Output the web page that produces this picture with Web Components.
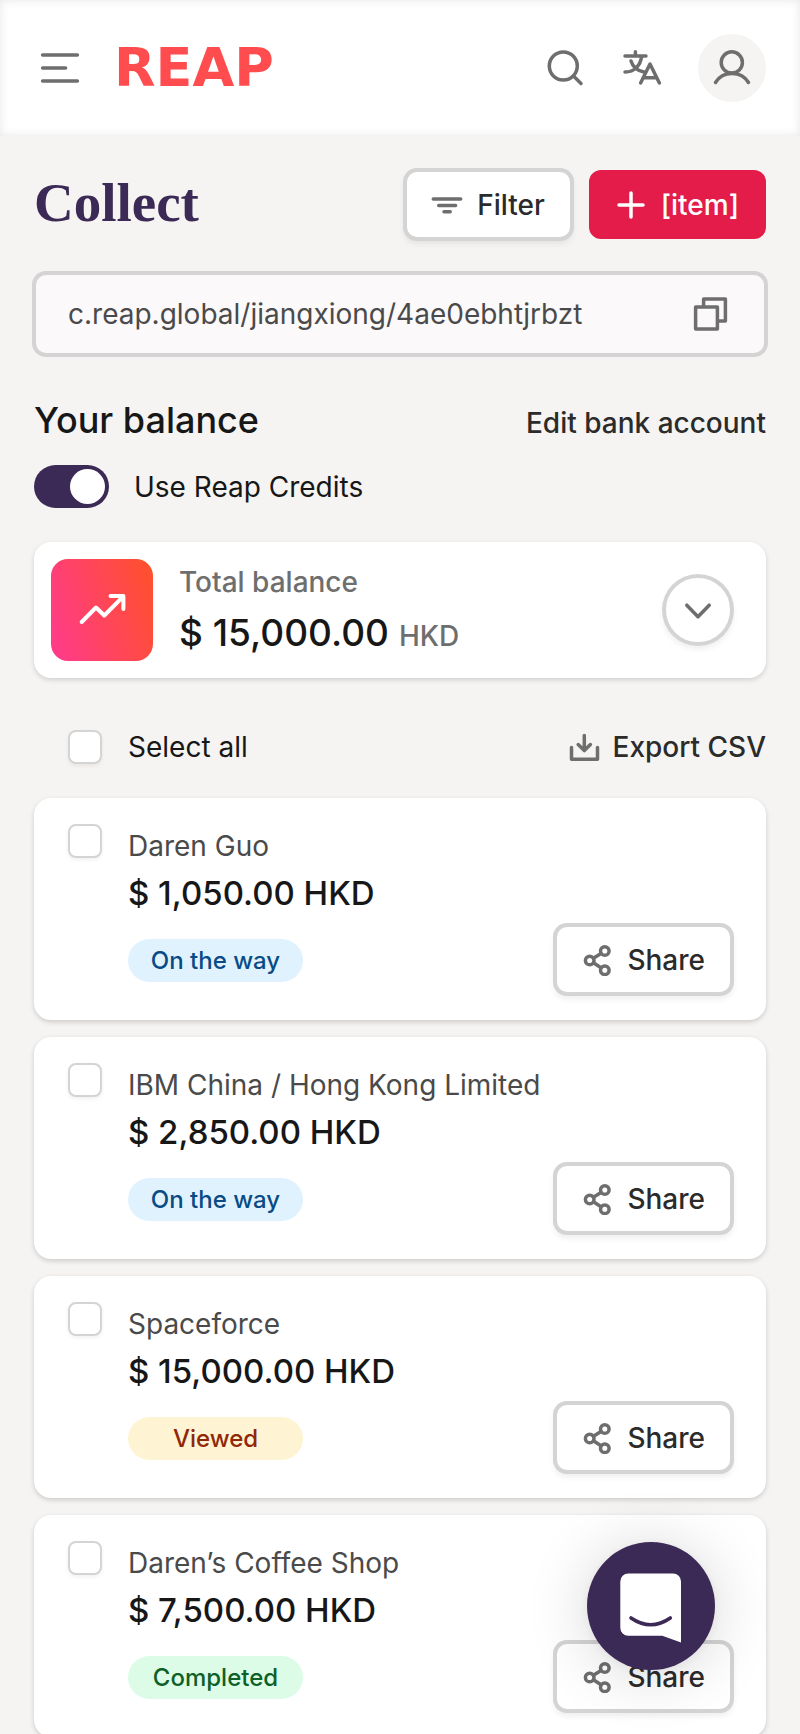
<!DOCTYPE html>
<html lang="en">
<head>
<meta charset="utf-8">
<meta name="viewport" content="width=device-width, initial-scale=1">
<title>Collect</title>
<style>
  body {
    margin: 0;
    background: #f5f4f2;
    color: #171717;
    font: 400 28px/34px Inter, "Liberation Sans", sans-serif;
    --line: #d4d4d4;
    --icon: #6e6e6e;
    --purple: #3c2a56;
    --red: #e31c4a;
  }
</style>
</head>
<body>
<collect-page></collect-page>

<script>
const define = (name, html, setup) => {
  const template = document.createElement('template');
  template.innerHTML = html;
  customElements.define(name, class extends HTMLElement {
    constructor() {
      super();
      this.attachShadow({ mode: 'open' }).append(template.content.cloneNode(true));
    }
    connectedCallback() {
      if (setup) setup(this, this.shadowRoot);
    }
  });
};

const glyphs = {
  menu: ['0 0 40 32', '<path d="M2.6 3H37.4M2.6 16H25.6M2.6 29H37.4"/>'],
  search: ['0 0 40 40', '<circle cx="17.3" cy="18" r="14"/><path d="M27.5 28L35 35.5"/>'],
  translate: ['0 0 40 40', '<path d="M3 8H24M13.4 3.8V8M19.6 8.5C18.4 17.5 12.6 24 3 24M9 13C10.8 18.8 15.6 22.8 22 24M18.6 35L28 16L37.4 35M21.5 29.8H34.5"/>'],
  user: ['0 0 68 68', '<circle cx="33.8" cy="28.4" r="10.6"/><path d="M17.5 48.5C21 42.5 27 39.4 34 39.4S47 42.5 50.5 48.5"/>'],
  filter: ['0 0 32 32', '<path d="M2.3 10H29.7M7.7 16.4H24.6M13 22.8H19.2"/>'],
  plus: ['0 0 32 32', '<path d="M16 4V28M4 16H28"/>'],
  copy: ['0 0 44 44', '<path d="M7.6 15.1H29.4V36.9H7.6ZM15.6 14.5V7.1H37.4V28.9H30.5"/>'],
  trend: ['0 0 102 102', '<path d="M30.7 63L45 48.5L53.3 56.5L72.3 37.3M59.5 37H72.4V50"/>'],
  chevron: ['0 0 64 64', '<path d="M20.8 27.2L32 38.8L43.2 27.2"/>'],
  download: ['0 0 32 32', '<path d="M2.5 16.5V28.3H28.5V16.5M15.3 4.5V19M9.2 13.5L15.3 19.6L21.4 13.5"/>'],
  share: ['0 0 32 32', '<circle cx="8.7" cy="16.5" r="4.3"/><circle cx="23.8" cy="7" r="4.3"/><circle cx="23.8" cy="26.2" r="4.3"/><path d="M12.4 14.2L20 9.4M12.4 18.8L20 23.8"/>']
};

define('ui-icon', `
  <style>
    :host { display: block; flex: none; width: var(--size, 32px); }
    svg { display: block; width: 100%; fill: none; stroke: currentColor; stroke-width: var(--stroke, 3.5px); stroke-linecap: round; stroke-linejoin: round; }
  </style>
  <svg aria-hidden="true"></svg>`, (host, root) => {
  const [box, shapes] = glyphs[host.getAttribute('name')];
  const svg = root.querySelector('svg');
  svg.setAttribute('viewBox', box);
  svg.innerHTML = shapes;
});

define('ui-button', `
  <style>
    :host { display: block; flex: none; }
    button {
      display: flex; align-items: center; gap: 14px; height: 69px; padding: 0 25px 0 24px;
      font: inherit; font-weight: 500; color: #2b2b2b; white-space: nowrap;
      background: #fff; border: 2px solid var(--line); border-radius: 12px;
      box-shadow: 0 0 0 2px var(--line), 0 4px 6px 1px rgba(0,0,0,.07);
    }
    ui-icon { color: var(--icon); }
    :host([primary]) button { background: var(--red); border-color: var(--red); color: #fff; box-shadow: none; }
    :host([primary]) ui-icon { color: #fff; }
  </style>
  <button type="button"><slot></slot></button>`, (host, root) => {
  const icon = document.createElement('ui-icon');
  icon.setAttribute('name', host.getAttribute('icon'));
  root.querySelector('button').prepend(icon);
});

define('ui-check', `
  <style>
    :host { display: block; flex: none; }
    input {
      appearance: none; display: block; width: 34px; height: 34px; margin: 0; box-sizing: border-box;
      background: #fff; border: 2px solid var(--line); border-radius: 8px; box-shadow: 0 2px 4px rgba(0,0,0,.06);
    }
    input:checked { background: var(--purple); }
    label { display: flex; align-items: center; gap: 26px; }
  </style>
  <label><input type="checkbox"><slot></slot></label>`);

define('ui-switch', `
  <style>
    :host { display: block; }
    label { display: flex; width: fit-content; align-items: center; gap: 25px; }
    input {
      appearance: none; display: flex; width: 75px; height: 43px; margin: 0; padding: 4px; box-sizing: border-box;
      border-radius: 22px; background: #a3a3a3;
    }
    input::before { content: ""; width: 35px; height: 35px; border-radius: 50%; background: #fff; }
    input:checked { background: var(--purple); justify-content: flex-end; }
  </style>
  <label><input type="checkbox" role="switch" checked><slot></slot></label>`);

define('app-header', `
  <style>
    :host {
      display: flex; align-items: center; height: 136px; padding: 0 34px 0 40px; box-sizing: border-box;
      background: #fff; box-shadow: inset 0 0 10px rgba(0,0,0,.1); color: var(--icon);
    }
    button { padding: 0; border: 0; background: none; color: inherit; }
    .menu, .tool { --size: 40px; }
    .logo {
      margin-left: 34px; color: #ff4d4f; text-decoration: none;
      font: 700 54px/64px "DejaVu Sans", Verdana, sans-serif;
    }
    nav { display: flex; align-items: center; gap: 36px; margin-left: auto; }
    .avatar { --size: 68px; border-radius: 50%; background: #f5f4f2; }
  </style>
  <button class="menu" type="button" aria-label="Menu"><ui-icon name="menu"></ui-icon></button>
  <a class="logo" href="#">REAP</a>
  <nav>
    <button class="tool" type="button" aria-label="Search"><ui-icon name="search"></ui-icon></button>
    <button class="tool" type="button" aria-label="Language"><ui-icon name="translate"></ui-icon></button>
    <button class="avatar" type="button" aria-label="Account"><ui-icon name="user"></ui-icon></button>
  </nav>`);

define('link-field', `
  <style>
    :host {
      display: flex; align-items: center; height: 82px; padding: 0 32px; box-sizing: border-box;
      background: #fbf9fa; border: 2px solid var(--line); border-radius: 12px; box-shadow: 0 0 0 2px var(--line);
    }
    input { flex: 1; min-width: 0; padding: 0; border: 0; background: none; font: inherit; color: #4a4a4a; }
    button { --size: 44px; padding: 0; border: 0; background: none; color: var(--icon); }
  </style>
  <input type="text" readonly aria-label="Payment link" value="c.reap.global/jiangxiong/4ae0ebhtjrbzt">
  <button type="button" aria-label="Copy"><ui-icon name="copy"></ui-icon></button>`);

define('balance-card', `
  <style>
    :host {
      display: flex; align-items: center; gap: 26px; padding: 17px 34px 17px 17px;
      background: #fff; border-radius: 17px; box-shadow: 0 2px 5px rgba(0,0,0,.15);
    }
    .tile { --size: 102px; --stroke: 4px; border-radius: 17px; color: #fff; background: linear-gradient(72deg, #ff3a8e, #ff5129); }
    .text { flex: 1; display: grid; gap: 12px; }
    .label { font-weight: 500; color: var(--icon); }
    .sum { display: flex; align-items: baseline; gap: 10px; font-weight: 500; font-size: 37px; line-height: 44px; }
    .sum small { font-size: 28px; line-height: 34px; color: var(--icon); }
    button {
      --size: 64px; box-sizing: border-box; width: 68px; height: 68px; padding: 0;
      color: var(--icon);
      background: #fff; border: 2px solid var(--line); border-radius: 50%;
      box-shadow: 0 0 0 2px var(--line), 0 4px 6px 1px rgba(0,0,0,.07);
    }
  </style>
  <ui-icon class="tile" name="trend"></ui-icon>
  <div class="text">
    <span class="label">Total balance</span>
    <span class="sum"><span>$ 15,000.00</span><small>HKD</small></span>
  </div>
  <button type="button" aria-label="Show details"><ui-icon name="chevron"></ui-icon></button>`);

define('payment-card', `
  <style>
    :host {
      display: flex; gap: 26px; padding: 26px 34px;
      background: #fff; border-radius: 17px; box-shadow: 0 2px 5px rgba(0,0,0,.17);
    }
    .info { flex: 1; min-width: 0; padding: 5px 0 12px; white-space: nowrap; }
    .name { color: #4a4a4a; }
    .amount { margin: 10px 0 26px; font-weight: 500; font-size: 33px; line-height: 40px; }
    .status {
      display: block; width: 175px; border-radius: 22px; text-align: center;
      font-weight: 500; font-size: 24px; line-height: 43px;
      background: #e0f2fe; color: #084b85;
    }
    :host([state=viewed]) .status { background: #fef3d2; color: #8f2708; }
    :host([state=completed]) .status { background: #dcfce7; color: #0e6027; }
    ui-button { align-self: flex-end; }
  </style>
  <ui-check></ui-check>
  <div class="info">
    <div class="name"><slot></slot></div>
    <div class="amount"><slot name="amount"></slot></div>
    <span class="status"><slot name="status"></slot></span>
  </div>
  <ui-button icon="share">Share</ui-button>`, (host, root) => {
  const name = host.querySelector(':not([slot])').textContent;
  root.querySelector('ui-check').shadowRoot.querySelector('input').setAttribute('aria-label', 'Select ' + name);
});

define('chat-launcher', `
  <style>
    :host { position: fixed; right: 85px; bottom: 64px; }
    button {
      display: block; width: 128px; height: 128px; padding: 0; border: 0; border-radius: 50%;
      background: var(--purple); box-shadow: 0 2px 12px rgba(0,0,0,.06), 0 4px 64px rgba(0,0,0,.16);
    }
    svg { display: block; }
  </style>
  <button type="button" aria-label="Open chat">
    <svg viewBox="0 0 128 128" aria-hidden="true">
      <path fill="#fff" d="M41.3 31.5H86a8 8 0 0 1 8 8V100.6L75.3 93.8H41.3a8 8 0 0 1-8-8V39.5a8 8 0 0 1 8-8Z"/>
      <path fill="none" stroke="#3c2a56" stroke-width="3.6" stroke-linecap="round" d="M44 76Q63.7 89.5 83.3 76"/>
    </svg>
  </button>`);

define('collect-page', `
  <style>
    :host { display: block; }
    main { padding: 34px 34px 0; }
    .title, .heading, .bulk { display: flex; align-items: center; }
    .title { gap: 17px; }
    h1 {
      flex: 1; margin: 0; padding-bottom: 4px; color: var(--purple);
      font: 700 55px/64px "Liberation Serif", "Times New Roman", serif;
    }
    link-field { margin-top: 34px; }
    .heading { justify-content: space-between; align-items: baseline; margin-top: 43px; }
    h2 { margin: 0; font-weight: 500; font-size: 36px; line-height: 44px; }
    a { color: #2b2b2b; font-weight: 500; text-decoration: none; }
    ui-switch { margin-top: 23px; }
    balance-card { margin-top: 34px; }
    .bulk { justify-content: space-between; margin: 52px 0 34px; padding-left: 34px; }
    .export { display: flex; align-items: center; gap: 12px; }
    .export ui-icon { color: var(--icon); }
    .list { display: grid; grid-template-columns: minmax(0, 1fr); gap: 17px; }
  </style>
  <app-header></app-header>
  <main>
    <div class="title">
      <h1>Collect</h1>
      <ui-button icon="filter">Filter</ui-button>
      <ui-button icon="plus" primary>[item]</ui-button>
    </div>
    <link-field></link-field>
    <div class="heading"><h2>Your balance</h2><a href="#">Edit bank account</a></div>
    <ui-switch>Use Reap Credits</ui-switch>
    <balance-card></balance-card>
    <div class="bulk">
      <ui-check>Select all</ui-check>
      <a class="export" href="#"><ui-icon name="download"></ui-icon>Export CSV</a>
    </div>
    <div class="list">
      <payment-card><span>Daren Guo</span><span slot="amount">$ 1,050.00 HKD</span><span slot="status">On the way</span></payment-card>
      <payment-card><span>IBM China / Hong Kong Limited</span><span slot="amount">$ 2,850.00 HKD</span><span slot="status">On the way</span></payment-card>
      <payment-card state="viewed"><span>Spaceforce</span><span slot="amount">$ 15,000.00 HKD</span><span slot="status">Viewed</span></payment-card>
      <payment-card state="completed"><span>Daren’s Coffee Shop</span><span slot="amount">$ 7,500.00 HKD</span><span slot="status">Completed</span></payment-card>
    </div>
  </main>
  <chat-launcher></chat-launcher>`);
</script>
</body>
</html>
